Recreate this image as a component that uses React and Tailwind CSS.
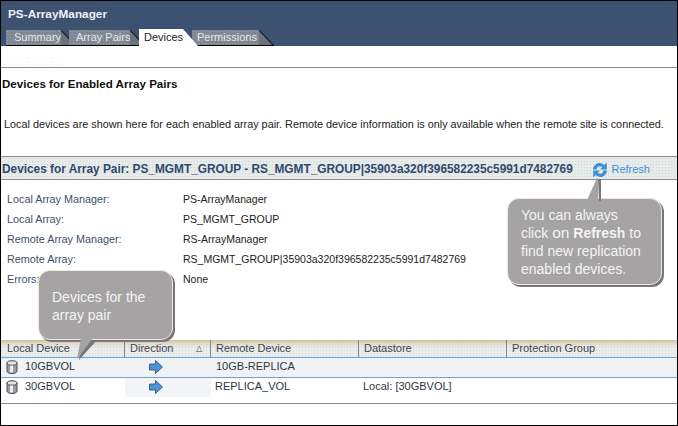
import React from "react";

const font = { fontFamily: '"Liberation Sans", Arial, sans-serif' };
const dots = {
  backgroundImage: "radial-gradient(#d4d6c8 0.6px, transparent 0.7px)",
  backgroundSize: "3px 3px",
};
const tabDots = {
  backgroundImage: "radial-gradient(#99a0aa 0.6px, transparent 0.7px)",
  backgroundSize: "3px 3px",
};
const headDots = {
  backgroundImage:
    "radial-gradient(#d5d7cc 0.6px, transparent 0.7px), linear-gradient(#cbbd9c 0px, #e3dfcf 4px, #eceeee 9px)",
  backgroundSize: "3px 3px, 100% 100%",
};
const checker = {
  backgroundImage: "radial-gradient(#dfe3e6 0.5px, transparent 0.6px)",
  backgroundSize: "2px 2px",
};
const ghost = {
  backgroundImage: "radial-gradient(#eeeeee 0.5px, transparent 0.6px)",
  backgroundSize: "3px 3px",
};

function Tab({ label, active, bodyClass }) {
  return (
    <div className={active ? "relative z-10 flex h-[17px] items-end" : "relative flex h-[16px] items-end"}>
      <div
        className={
          "flex items-center whitespace-nowrap text-[11px] " +
          bodyClass +
          (active
            ? " h-[17px] bg-white text-[#222]"
            : " h-[16px] border-b border-black bg-[#7f8793] text-[#e4e6ea]")
        }
        style={active ? undefined : tabDots}
      >
        {label}
      </div>
      <svg width="15" height={active ? 17 : 16} viewBox="0 0 15 16" preserveAspectRatio="none" className="block">
        <polygon points="0,0 15,16 0,16" fill={active ? "#ffffff" : "#6b7380"} />
        {!active && <line x1="0" y1="0" x2="15" y2="16" stroke="#1c2028" strokeWidth="1.2" />}
        {!active && <line x1="0" y1="15.500" x2="15" y2="15.500" stroke="#000" strokeWidth="1" />}
      </svg>
    </div>
  );
}

function Row({ k, v }) {
  return (
    <div className="flex h-[20px] items-center">
      <div className="w-[176px] text-[10.8px] text-[#3c4f6b]">{k}</div>
      <div className="pt-[1px] text-[10.5px] text-[#222]">{v}</div>
    </div>
  );
}

function Cyl() {
  return (
    <svg width="12" height="14" viewBox="0 0 12 14" className="block">
      <path d="M1 3v8c0 1.500 2.200 2.500 5 2.500s5-1 5-2.500V3z" fill="#9a9ea4" stroke="#444a52" />
      <ellipse cx="6" cy="3" rx="5" ry="2.200" fill="#e2e4e6" stroke="#444a52" />
      <rect x="4" y="5.500" width="3" height="7" fill="#eceef0" />
    </svg>
  );
}

function Arrow() {
  return (
    <svg width="14" height="14" viewBox="0 0 14 14" className="block">
      <path d="M0.500 4h6V0.500L13.500 7l-7 6.500V10h-6z" fill="#4f94d8" stroke="#34495f" strokeWidth="0.8" />
    </svg>
  );
}

function Refresh() {
  return (
    <svg width="16" height="16" viewBox="0 0 16 16" className="block">
      <path d="M1 7.500C1.500 3.500 4.300 1 7.500 1c2 0 3.500.8 4.600 2L14.800.5v7H8l2.300-2.300C9.600 4.600 8.700 4.200 7.500 4.200 6 4.200 4.900 5.400 4.600 7.500z" fill="#3f8fd2" />
      <path d="M15 8.500c-.5 4-3.300 6.500-6.500 6.500-2 0-3.500-.8-4.600-2L1.200 15.500v-7H8l-2.300 2.300c.7.600 1.600 1 2.800 1 1.500 0 2.600-1.200 2.900-3.300z" fill="#3f8fd2" />
    </svg>
  );
}

function Bubble({ className, children }) {
  return (
    <div className={"absolute rounded-[12px] border border-[#efe9d8] bg-[#a5a3a4] text-[14px] leading-[18px] text-[#f4f4f4] shadow-[2px_2px_0_#77767c] " + className}>
      {children}
    </div>
  );
}

export default function App() {
  return (
    <div className="relative h-[426px] w-[678px] overflow-hidden border border-black bg-white text-[11px]" style={font}>
      <div className="flex h-[45px] flex-col bg-[#3d5270]">
        <div className="flex h-[27px] items-center pl-[7px] pt-[1px] text-[11.8px] font-bold text-[#eef1f5]">PS-ArrayManager</div>
        <div className="mt-[1px] flex h-[17px] items-end pl-[5px]">
          <Tab label="Summary" bodyClass="w-[55px] pl-[8px]" />
          <div className="-ml-[7px]"><Tab label="Array Pairs" bodyClass="w-[61px] pl-[7px]" /></div>
          <div className="relative z-10 -ml-[6px]"><Tab label="Devices" active bodyClass="w-[44px] pl-[5px]" /></div>
          <div className="-ml-[6px]"><Tab label="Permissions" bodyClass="w-[67px] pl-[5px]" /></div>
        </div>
      </div>
      <div className="h-[22px] border-b border-[#8c8c8c] pl-[6px] pt-[11px]">
        <div className="h-[9px] w-[56px]" style={ghost} />
      </div>
      <div className="flex h-[32px] items-center pl-[1px] text-[11.6px] font-bold text-[#111]">Devices for Enabled Array Pairs</div>
      <div className="mt-[16px] flex h-[16px] items-center whitespace-nowrap pl-[3px] text-[10.83px] text-[#222]">
        Local devices are shown here for each enabled array pair. Remote device information is only available when the remote site is connected.
      </div>
      <div className="mt-[24px] border-t border-[#8c8c8c]" />
      <div
        className="flex h-[23px] items-center justify-between border-b border-[#8c8c94] bg-[#e6ebec] pr-[27px] pt-[3px] text-[#2f4a6d]"
        style={dots}
      >
        <div className="whitespace-nowrap pl-[1px] text-[11.85px] font-bold">Devices for Array Pair: PS_MGMT_GROUP - RS_MGMT_GROUP|35903a320f396582235c5991d7482769</div>
        <div className="flex items-center gap-[3px] text-[#3f8fd2]"><Refresh />Refresh</div>
      </div>
      <div className="mt-[9px] pl-[6px]">
        <Row k="Local Array Manager:" v="PS-ArrayManager" />
        <Row k="Local Array:" v="PS_MGMT_GROUP" />
        <Row k="Remote Array Manager:" v="RS-ArrayManager" />
        <Row k="Remote Array:" v="RS_MGMT_GROUP|35903a320f396582235c5991d7482769" />
        <Row k="Errors:" v="None" />
      </div>
      <div className="mt-[51px] flex h-[17px] items-center bg-[#e9ebeb] text-[#3a4654]" style={headDots}>
        <div className="flex h-full w-[124px] items-center border-r border-[#7d8794] pl-[6px]">Local Device</div>
        <div className="relative flex h-full w-[86px] items-center border-r border-[#7d8794] pl-[5px]">Direction<span className="absolute right-[8px] top-[3px] text-[8px]">△</span></div>
        <div className="flex h-full w-[148px] items-center border-r border-[#7d8794] pl-[5px]">Remote Device</div>
        <div className="flex h-full w-[148px] items-center border-r border-[#7d8794] pl-[5px]">Datastore</div>
        <div className="flex h-full flex-1 items-center pl-[5px]">Protection Group</div>
      </div>
      <div className="flex h-[21px] items-center border-y border-[#6ba3dd] bg-[#f0f3f3] pb-[2px] text-[#2c3744]" style={checker}>
        <div className="flex w-[124px] items-center gap-[7px] pl-[5px]"><Cyl />10GBVOL</div>
        <div className="w-[86px] pl-[24px]"><Arrow /></div>
        <div className="pl-[5px]">10GB-REPLICA</div>
      </div>
      <div className="flex h-[19px] items-center pb-[2px] text-[#2c3744]">
        <div className="flex w-[124px] items-center gap-[7px] pl-[5px]"><Cyl />30GBVOL</div>
        <div className="-mb-[2px] flex h-[19px] w-[86px] items-center bg-[#f2f4f5] pb-[2px] pl-[24px]" style={checker}><Arrow /></div>
        <div className="w-[148px] pl-[4px]">REPLICA_VOL</div>
        <div className="pl-[4px]">Local: [30GBVOL]</div>
      </div>
      <div className="mt-[6px] border-t border-[#8c8c8c]" />

      <svg width="20" height="24" viewBox="0 0 20 24" className="absolute left-[584px] top-[177px] z-10">
        <polygon points="13,1 16,1 16,23 14,23" fill="#77767c" />
        <polygon points="12,0 2,22 13,22 13,0" fill="#a5a3a4" />
      </svg>
      <Bubble className="left-[506px] top-[197px] h-[87px] w-[155px] pl-[13px] pt-[7px]">
        You can always<br />click <span className="text-[15.5px]">on</span> <b>Refresh</b> to<br />find new replication<br />enabled devices.
      </Bubble>

      <svg width="26" height="24" viewBox="0 0 26 24" className="absolute left-[72px] top-[337px] z-10">
        <polygon points="8,2 24,2 6,22" fill="#77767c" />
        <polygon points="8,0 20,0 4,21" fill="#a5a3a4" />
      </svg>
      <Bubble className="left-[37px] top-[269px] h-[70px] w-[135px] pl-[13px] pt-[17px]">
        Devices for the<br />array pair
      </Bubble>
    </div>
  );
}
